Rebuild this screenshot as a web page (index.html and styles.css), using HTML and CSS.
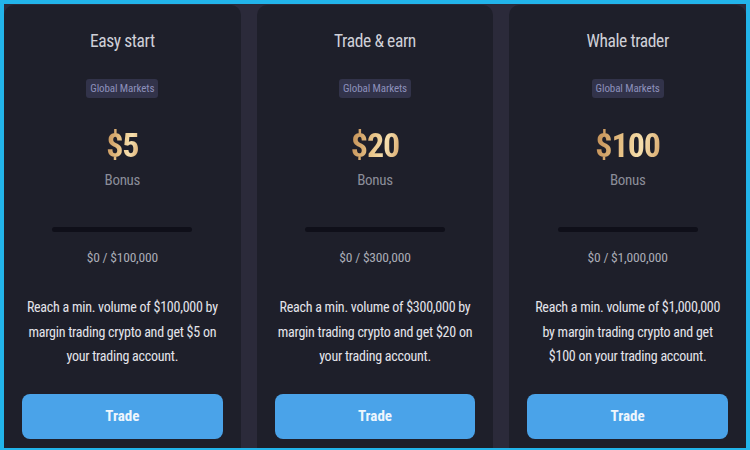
FILE: index.html
```html
<!DOCTYPE html>
<html>
<head>
    <meta charset="UTF-8">
    <title>Bonus tiers</title>
    <link rel="stylesheet" href="styles.css">
</head>
<body>
    <div class="frame">
        <div class="tiers">
            <div class="tier-card">
                <h2 class="tier-title">Easy start</h2>
                <span class="badge">Global Markets</span>
                <div class="amount">$5</div>
                <div class="amount-label">Bonus</div>
                <div class="progress"><div class="progress-fill"></div></div>
                <div class="progress-text">$0 / $100,000</div>
                <p class="desc">Reach a min. volume of $100,000 by margin trading crypto and get $5 on your trading account.</p>
                <button class="trade-btn">Trade</button>
            </div>
            <div class="tier-card">
                <h2 class="tier-title">Trade &amp; earn</h2>
                <span class="badge">Global Markets</span>
                <div class="amount">$20</div>
                <div class="amount-label">Bonus</div>
                <div class="progress"><div class="progress-fill"></div></div>
                <div class="progress-text">$0 / $300,000</div>
                <p class="desc">Reach a min. volume of $300,000 by margin trading crypto and get $20 on your trading account.</p>
                <button class="trade-btn">Trade</button>
            </div>
            <div class="tier-card">
                <h2 class="tier-title">Whale trader</h2>
                <span class="badge">Global Markets</span>
                <div class="amount">$100</div>
                <div class="amount-label">Bonus</div>
                <div class="progress"><div class="progress-fill"></div></div>
                <div class="progress-text">$0 / $1,000,000</div>
                <p class="desc">Reach a min. volume of $1,000,000 by margin trading crypto and get $100 on your trading account.</p>
                <button class="trade-btn">Trade</button>
            </div>
        </div>
    </div>
</body>
</html>
```

FILE: styles.css
```css
html, body {
    margin: 0;
    height: 100%;
}
body {
    font-family: "Liberation Sans Narrow", "Roboto Condensed", "Liberation Sans", sans-serif;
    background-color: #2b2a3a;
    overflow: hidden;
}
.frame {
    box-sizing: border-box;
    height: 450px;
    border-style: solid;
    border-color: #22b4ea;
    border-width: 4px 4px 2px 4px;
    overflow: hidden;
}
.tiers {
    display: grid;
    grid-template-columns: 1fr 1fr 1fr;
    column-gap: 16px;
    height: 100%;
    padding-top: 1px;
    box-sizing: border-box;
}
.tier-card {
    background-color: #1e1f2a;
    border-radius: 10px 10px 0 0;
    padding: 25px 18px 0 18px;
    display: flex;
    flex-direction: column;
    align-items: center;
    text-align: center;
}
.tier-title {
    margin: 0;
    font-size: 17.5px;
    line-height: 22px;
    letter-spacing: -0.4px;
    font-weight: normal;
    color: #cfd0d8;
}
.badge {
    margin-top: 27px;
    background-color: #32334a;
    color: #8d90bb;
    font-size: 11px;
    line-height: 19px;
    letter-spacing: -0.1px;
    padding: 0 4px;
    border-radius: 3px;
}
.amount {
    margin-top: 27px;
    font-size: 34px;
    line-height: 40px;
    letter-spacing: -1px;
    font-weight: bold;
    background: linear-gradient(100deg, #c08b52 0%, #e9c488 45%, #f6dfae 70%, #d6a569 100%);
    -webkit-background-clip: text;
    background-clip: text;
    color: transparent;
}
.amount-label {
    margin-top: 6px;
    font-size: 15px;
    line-height: 18px;
    letter-spacing: -0.3px;
    color: #8b8d99;
}
.progress {
    margin-top: 38px;
    width: 140px;
    height: 5px;
    border-radius: 3px;
    background-color: #0f0f19;
}
.progress-fill {
    width: 0;
    height: 100%;
}
.progress-text {
    margin-top: 16px;
    font-size: 13.5px;
    line-height: 18px;
    letter-spacing: -0.2px;
    color: #aaacb6;
}
.desc {
    margin: 29px 0 0 0;
    max-width: 196px;
    font-size: 14px;
    line-height: 24.5px;
    letter-spacing: -0.25px;
    color: #e4e4ea;
}
.trade-btn {
    margin-top: 25px;
    width: 100%;
    height: 45px;
    flex-shrink: 0;
    border: none;
    border-radius: 8px;
    background-color: #4aa3e9;
    color: #eef6fd;
    font-family: inherit;
    font-size: 15px;
    font-weight: bold;
    cursor: pointer;
}
```
